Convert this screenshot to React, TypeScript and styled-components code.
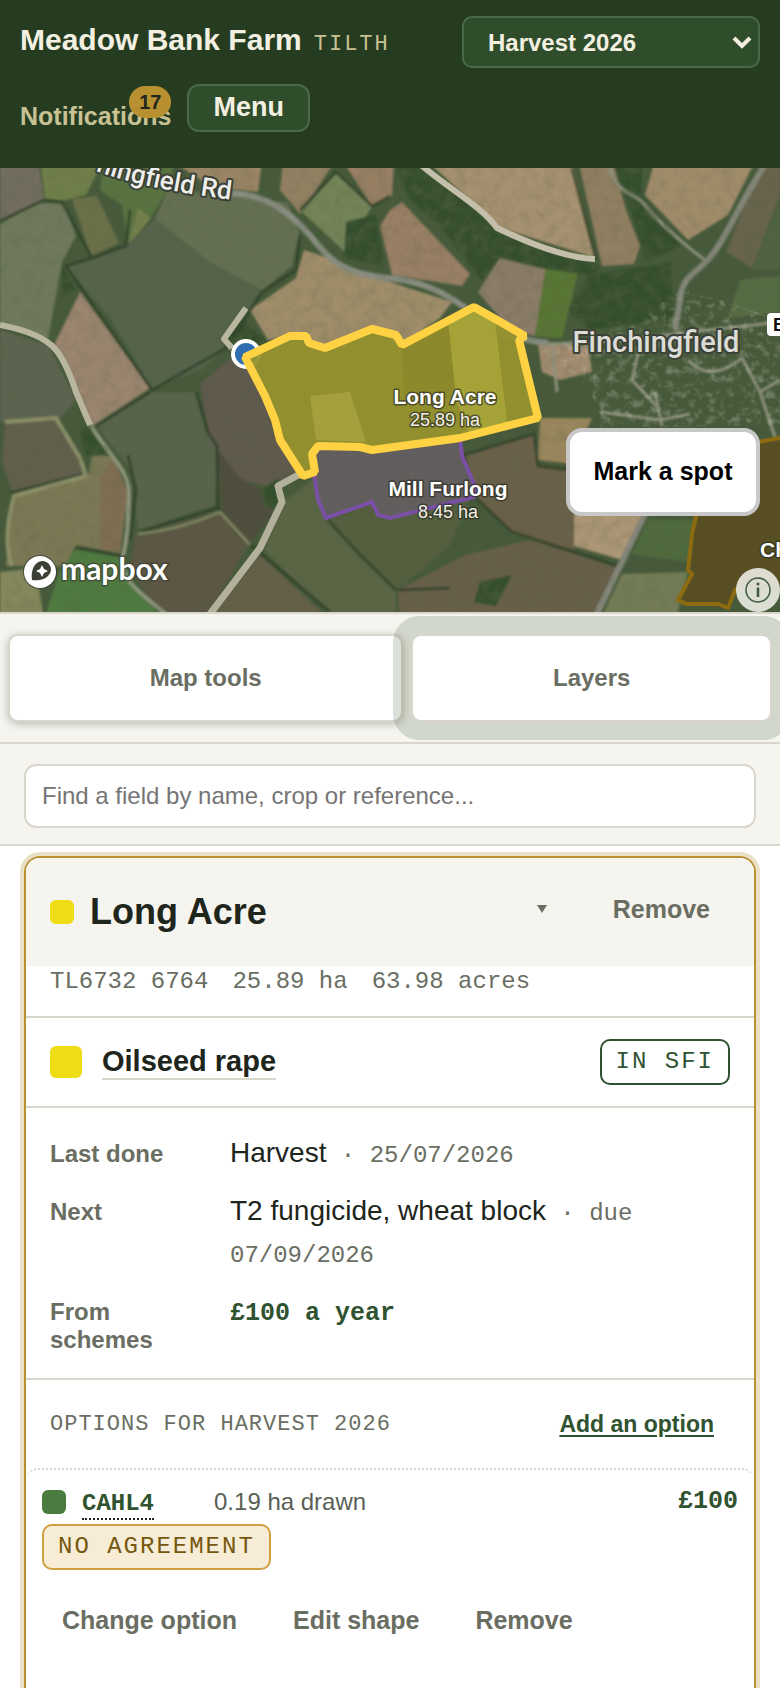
import React from "react";
import styled, { createGlobalStyle, css } from "styled-components";

const sans = `"Liberation Sans", Arial, sans-serif`;
const mono = `"Liberation Mono", "Courier New", monospace`;

const color = {
  forest: "#253c21",
  forestLight: "#2f4d2b",
  forestLine: "#49694a",
  cream: "#f3f0e2",
  sand: "#c8c193",
  gold: "#b8902f",
  paper: "#f5f4ef",
  line: "#d9d6cc",
  ink: "#20251c",
  muted: "#6a6e62",
  green: "#2f5230",
  rape: "#eedc14",
};

const GlobalStyle = createGlobalStyle`
  *, *::before, *::after { box-sizing: border-box; }
  html { background: #fff; scrollbar-width: none; }
  body { margin: 0; font-family: ${sans}; color: ${color.ink}; font-size: 24px; }
  button, input, select { font-family: inherit; }
  button { cursor: pointer; }
`;

const Page = styled.div`
  overflow: hidden;
  background: #fff;
`;

/* ---------- header ---------- */

const Header = styled.header`
  background: ${color.forest};
  padding: 16px 20px 36px;
  display: flex;
  flex-direction: column;
  gap: 16px;
`;

const HeaderRow = styled.div<{ $spread?: boolean }>`
  display: flex;
  align-items: center;
  gap: 16px;
  justify-content: ${(p) => (p.$spread ? "space-between" : "flex-start")};
`;

const Brand = styled.div`
  display: flex;
  align-items: baseline;
  gap: 12px;
  padding-bottom: 4px;
`;

const FarmName = styled.h1`
  margin: 0;
  font-size: 30px;
  line-height: 36px;
  font-weight: 700;
  color: ${color.cream};
`;

const Product = styled.span`
  font-family: ${mono};
  font-size: 22px;
  letter-spacing: 2px;
  color: ${color.sand};
`;

const SeasonBox = styled.div`
  position: relative;
  width: 298px;
`;

const SeasonSelect = styled.select`
  appearance: none;
  width: 100%;
  height: 52px;
  padding: 0 24px;
  border: 2px solid ${color.forestLine};
  border-radius: 10px;
  background: ${color.forestLight};
  color: ${color.cream};
  font-size: 24px;
  font-weight: 700;
`;

const SeasonArrow = styled.svg`
  position: absolute;
  right: 8px;
  top: 19px;
  pointer-events: none;
`;

const NotificationsLink = styled.a`
  position: relative;
  padding-top: 16px;
  font-size: 25px;
  line-height: 32px;
  font-weight: 700;
  color: ${color.sand};
  text-decoration: none;
`;

const Count = styled.span`
  position: absolute;
  right: 0;
  top: 2px;
  padding: 0 10px;
  border-radius: 16px;
  background: ${color.gold};
  color: ${color.ink};
  font-size: 20px;
  line-height: 32px;
`;

const MenuButton = styled.button`
  height: 48px;
  padding: 0 24px 2px;
  border: 2px solid ${color.forestLine};
  border-radius: 12px;
  background: ${color.forestLight};
  color: ${color.cream};
  font-size: 27px;
  font-weight: 700;
`;

/* ---------- map ---------- */

const MapArea = styled.section`
  position: relative;
  height: 444px;
  background: #566046;
`;

const MapCanvas = styled.svg`
  display: block;
  width: 100%;
  height: 100%;
  font-family: ${sans};
`;

const MarkButton = styled.button`
  position: absolute;
  right: 20px;
  bottom: 96px;
  width: 194px;
  height: 88px;
  padding: 0 0 2px;
  border: 4px solid #c9c8c9;
  border-radius: 16px;
  background: #fff;
  color: #000;
  font-size: 25px;
  font-weight: 700;
`;

const InfoButton = styled.button`
  position: absolute;
  right: 0;
  bottom: 0;
  width: 44px;
  height: 44px;
  padding: 0;
  border: 0;
  border-radius: 22px;
  background: rgba(240, 240, 232, 0.88);
  display: grid;
  place-items: center;
`;

/* ---------- tool bar and search ---------- */

const ToolBar = styled.div`
  display: flex;
  gap: 8px;
  padding: 20px 8px;
  border: solid ${color.line};
  border-width: 2px 0;
  background: ${color.paper};
`;

const ToolButton = styled.button<{ $ring?: boolean }>`
  flex: 1 1 auto;
  height: 88px;
  border: 2px solid ${color.line};
  border-radius: 10px;
  background: #fff;
  color: ${color.muted};
  font-size: 24px;
  font-weight: 700;
  ${(p) =>
    p.$ring
      ? css`
          position: relative;
          box-shadow: 0 0 0 18px rgba(57, 82, 38, 0.18);
        `
      : css`
          box-shadow: 0 2px 8px rgba(32, 37, 28, 0.28);
        `}
`;

const SearchBar = styled.div`
  padding: 20px 24px 16px;
  border-bottom: 2px solid ${color.line};
  background: ${color.paper};
`;

const SearchInput = styled.input`
  display: block;
  width: 100%;
  height: 64px;
  padding: 0 16px;
  border: 2px solid ${color.line};
  border-radius: 12px;
  background: #fff;
  font-size: 24px;
  &::placeholder {
    color: #757575;
    opacity: 1;
  }
`;

/* ---------- field card ---------- */

const Card = styled.article`
  margin: 10px 24px 0;
  border: 2px solid ${color.gold};
  border-bottom: 0;
  border-radius: 16px 16px 0 0;
  box-shadow: 0 0 0 4px #eae0c8;
`;

const CardHead = styled.header`
  display: flex;
  align-items: center;
  height: 108px;
  padding: 0 24px;
  gap: 16px;
  border-radius: 14px 14px 0 0;
  background: ${color.paper};
`;

const Swatch = styled.span<{ $size: number; $fill: string }>`
  flex: none;
  width: ${(p) => p.$size}px;
  height: ${(p) => p.$size}px;
  border-radius: 6px;
  background: ${(p) => p.$fill};
`;

const FieldName = styled.h2`
  flex: 1;
  margin: 0;
  font-size: 36px;
  line-height: 40px;
  font-weight: 700;
`;

const HeadActions = styled.div`
  display: flex;
  align-items: center;
  gap: 34px;
  padding-bottom: 6px;
`;

const FoldButton = styled.button`
  display: grid;
  place-items: center;
  padding: 12px;
  border: 0;
  background: none;
`;

const TextButton = styled.button`
  height: 48px;
  padding: 0 20px;
  border: 0;
  background: none;
  color: ${color.muted};
  font-size: 25px;
  font-weight: 700;
`;

const Measures = styled.div`
  display: flex;
  gap: 24px;
  padding: 0 24px 18px;
  border-bottom: 2px solid ${color.line};
  font-family: ${mono};
  font-size: 24px;
  line-height: 32px;
  color: ${color.muted};
`;

const CropRow = styled.div`
  display: flex;
  align-items: center;
  gap: 20px;
  height: 90px;
  padding: 0 24px;
  border-bottom: 2px solid ${color.line};
`;

const CropName = styled.a`
  margin-right: auto;
  border-bottom: 2px solid ${color.line};
  color: ${color.ink};
  font-size: 29px;
  line-height: 34px;
  font-weight: 700;
  text-decoration: none;
`;

const Tag = styled.span<{ $warn?: boolean }>`
  display: inline-block;
  padding: 0 14px;
  border: 2px solid ${(p) => (p.$warn ? "#d0a040" : color.green)};
  border-radius: 10px;
  background: ${(p) => (p.$warn ? "#f7ecd6" : "#fff")};
  color: ${(p) => (p.$warn ? "#76570f" : color.green)};
  font-family: ${mono};
  font-size: 24px;
  line-height: 42px;
  letter-spacing: 2px;
`;

const Facts = styled.dl`
  display: grid;
  grid-template-columns: 144px 1fr;
  column-gap: 36px;
  row-gap: 16px;
  align-items: baseline;
  margin: 0;
  padding: 24px;
  border-bottom: 2px solid ${color.line};
`;

const FactLabel = styled.dt`
  font-size: 24px;
  line-height: 28px;
  font-weight: 700;
  color: ${color.muted};
`;

const FactValue = styled.dd`
  margin: 0;
  font-size: 28px;
  line-height: 42px;
`;

const MonoText = styled.span<{ $strong?: boolean; $large?: boolean }>`
  font-family: ${mono};
  font-size: ${(p) => (p.$large ? 25 : 24)}px;
  line-height: 28px;
  font-weight: ${(p) => (p.$strong ? 700 : 400)};
  color: ${(p) => (p.$strong ? color.green : color.muted)};
`;

const OptionsHead = styled.div`
  display: flex;
  align-items: center;
  justify-content: space-between;
  height: 88px;
  padding: 0 40px 0 24px;
`;

const OptionsTitle = styled.h3`
  margin: 0;
  font-family: ${mono};
  font-size: 22px;
  font-weight: 400;
  letter-spacing: 1px;
  text-transform: uppercase;
  color: ${color.muted};
`;

const AddLink = styled.a`
  font-size: 23px;
  font-weight: 700;
  color: ${color.green};
  text-decoration: underline;
  text-decoration-thickness: 2px;
  text-underline-offset: 3px;
`;

const Option = styled.div`
  padding: 20px 16px 100px;
  border-top: 2px dotted ${color.line};
  border-radius: 12px 12px 0 0;
`;

const OptionLine = styled.div`
  display: flex;
  align-items: center;
  gap: 16px;
  height: 24px;
`;

const OptionCode = styled.a`
  margin-top: 6px;
  border-bottom: 2px dotted ${color.ink};
  font-family: ${mono};
  font-size: 24px;
  line-height: 28px;
  font-weight: 700;
  color: ${color.green};
  text-decoration: none;
`;

const OptionArea = styled.span`
  flex: 1;
  padding-left: 44px;
  font-size: 24px;
  line-height: 28px;
  color: #5b5f54;
`;

const OptionTags = styled.div`
  display: flex;
  margin-top: 10px;
`;

const OptionActions = styled.div`
  display: flex;
  gap: 16px;
  margin-top: 26px;
`;

/* ---------- aerial map drawing ---------- */

type Parcel = [points: string, fill: string];

const parcels: Parcel[] = [
  ["0,160 38,160 44,199 0,221", "#726d5d"],
  ["40,160 104,160 86,195 62,201 45,199", "#6f7f48"],
  ["0,224 38,203 64,204 76,236 62,262 48,340 0,323", "#70795d"],
  ["72,199 97,196 119,243 91,256", "#6c7049"],
  ["104,160 175,160 168,190 150,218 128,246 122,205 100,190", "#58733f"],
  ["128,246 138,208 151,218", "#77804d"],
  ["66,266 124,247 155,219 210,260 262,290 244,316 222,340 226,348 200,370 152,388 110,318", "#55634b"],
  ["155,219 168,190 235,195 288,203 299,232 292,266 262,290 210,262", "#657052"],
  ["80,292 150,388 92,426 78,394 54,345", "#9b856f"],
  ["0,330 48,345 76,400 60,418 0,422", "#5d6350"],
  ["170,160 262,160 258,192 210,186", "#9a8565"],
  ["283,160 336,160 300,214 280,190", "#938062"],
  ["336,172 372,206 345,252 302,212", "#738459"],
  ["342,160 394,160 392,196 372,206", "#987f64"],
  ["304,250 322,256 390,282 452,302 440,318 402,345 372,329 325,346 290,336 268,340 250,310 296,278", "#a08d6b"],
  ["390,210 402,202 470,274 462,286 392,275 380,226", "#997f65"],
  ["426,160 572,160 596,258 500,228", "#a6916f"],
  ["578,160 612,160 626,210 640,246 634,264 602,266", "#927f62"],
  ["655,160 756,160 728,215 688,240 645,195", "#a18c6a"],
  ["478,292 500,257 546,266 535,336 510,330", "#8a7c67"],
  ["546,266 578,272 562,338 535,336", "#587636"],
  ["762,160 780,160 780,196 752,268 726,252", "#68634e"],
  ["780,200 780,270 752,270", "#4f6442"],
  ["740,280 780,276 780,312 728,318", "#566c44"],
  ["5,422 55,417 85,465 82,475 12,492 2,460", "#625f4e"],
  ["12,497 88,476 92,456 112,456 128,492 120,553 76,545 65,566 6,566", "#7c7855"],
  ["100,480 112,456 128,492 120,553 100,548", "#806e53"],
  ["76,549 122,556 135,590 165,620 44,620 60,570", "#4f7a40"],
  ["0,572 36,568 44,620 0,620", "#85875b"],
  ["96,425 150,393 196,392 206,432 217,446 215,505 138,530 132,472", "#58634b"],
  ["200,384 240,350 258,385 278,440 300,470 268,486 240,480 210,440", "#605a4d"],
  ["218,450 240,478 262,490 274,512 248,545 222,512", "#4f4d3d"],
  ["135,535 218,512 248,545 205,620 165,620 130,570", "#5b5644"],
  ["260,555 330,620 208,620", "#655f4a"],
  ["286,500 314,478 328,520 396,590 396,620 335,620 264,550", "#5a6544"],
  ["328,520 372,504 382,520 400,516 470,498 450,545 398,590", "#555f41"],
  ["463,455 534,434 538,466 572,470 574,550 512,534 474,496", "#6a604a"],
  ["540,418 592,418 572,464 538,460", "#9a865c"],
  ["465,555 530,540 618,568 595,620 400,620 398,590", "#685e48"],
  ["574,512 644,512 622,560 574,546", "#ab9675"],
  ["648,520 695,520 692,562 632,554", "#4f6b3e"],
  ["622,574 688,572 676,620 600,620", "#737c57"],
  ["538,344 588,346 592,372 560,380 542,372", "#a18b70"],
];

const woods: string[] = [
  "392,160 420,160 500,234 600,266 596,276 540,268 500,258 482,282 440,225 410,200",
  "346,222 376,214 384,266 344,258",
  "240,318 266,340 244,348 226,340",
  "62,266 76,290 62,296",
  "80,430 90,424 110,452 86,456",
  "262,490 278,478 280,508 264,506",
  "480,582 512,575 496,606 474,602",
  "612,160 642,160 642,195 682,245 645,262 634,220",
  "590,275 670,262 674,318 590,330 568,310",
];

const hedges: string[] = [
  "M0,221 L44,200 L62,202 L92,258 L66,266 L152,390 L226,348 L262,292 L296,270 L300,236",
  "M92,258 L126,246 L130,210",
  "M93,428 L150,392",
  "M196,392 L208,432 L217,446 L218,508 L140,532",
  "M128,455 L136,490 L130,540",
  "M218,508 L240,536 L330,612",
  "M328,520 L360,555 L396,590",
  "M572,168 L596,260",
  "M464,455 L474,496 L512,532 L618,566",
  "M464,455 L534,434 L538,466 L570,470",
  "M10,493 L84,474",
  "M398,590 L450,588",
  "M76,548 L122,556",
  "M300,210 L336,172 L372,206 L390,196",
];

const lanes = [
  "M425,430 L430,420",
  "M525,340 L550,344 Q620,342 690,332 L780,322",
  "M608,160 C615,198 634,190 645,205 S690,250 708,262",
  "M552,344 L557,392",
  "M640,344 L632,380 L660,410",
  "M600,412 L660,420 L690,414",
  "M655,392 L662,426",
  "M688,360 Q710,384 742,358 L760,392 L780,380",
  "M760,392 L776,440",
];

const longAcre =
  "245,357 290,336 306,336 309,343 325,348 372,329 396,335 402,345 474,307 525,336 519,340 538,418 460,438 372,450 360,447 318,446 312,454 315,472 303,476 280,440 275,420 265,396";

function AerialMap() {
  return (
    <MapCanvas viewBox="0 168 780 444" preserveAspectRatio="xMidYMid slice" role="img" aria-label="Aerial map of the farm">
      <defs>
        <filter id="soft">
          <feGaussianBlur stdDeviation="1" />
        </filter>
        <filter id="grain" x="0" y="0" width="100%" height="100%">
          <feTurbulence type="fractalNoise" baseFrequency="0.09" numOctaves="4" seed="7" />
          <feColorMatrix values="0 0 0 0 0.08  0 0 0 0 0.12  0 0 0 0 0.05  1.6 0 0 0 -0.62" />
        </filter>
        <filter id="village" x="0" y="0" width="100%" height="100%">
          <feTurbulence type="fractalNoise" baseFrequency="0.12" numOctaves="3" seed="3" />
          <feColorMatrix values="0 0 0 0 0.68  0 0 0 0 0.66  0 0 0 0 0.56  0 2.4 0 0 -1.15" />
        </filter>
        <clipPath id="villageArea">
          <path d="M540,350 L640,320 L680,290 L720,300 L780,320 L780,425 L600,428 L590,385 Z" />
        </clipPath>
        <clipPath id="woodArea">
          {woods.map((w) => (
            <polygon key={w} points={w} />
          ))}
        </clipPath>
        <path id="roadName" d="M70,160 Q130,191 280,205" />
      </defs>

      <rect y="160" width="780" height="460" fill="#465a3b" />
      <g filter="url(#soft)">
        {parcels.map(([points, fill]) => (
          <polygon key={points} points={points} fill={fill} />
        ))}
        {woods.map((w) => (
          <polygon key={w} points={w} fill="#35502f" />
        ))}
        <g fill="none" stroke="#2e3f29" strokeWidth="3" opacity="0.8">
          {hedges.map((d) => (
            <path key={d} d={d} />
          ))}
        </g>
        <g fill="none" stroke="#8f927f" strokeWidth="3">
          {lanes.map((d) => (
            <path key={d} d={d} />
          ))}
        </g>
        <g fill="none" strokeLinejoin="round">
          <path d="M12,566 Q2,540 14,496 L86,476 L80,458 L56,418 L5,422" stroke="#8d9069" strokeWidth="4" />
          <path d="M138,534 Q180,530 220,512 L250,545" stroke="#7f8463" strokeWidth="3" />
          <path d="M232,193 C275,196 298,220 318,245 S358,275 395,279 S455,300 480,318 S520,340 548,343" stroke="#888d80" strokeWidth="6" />
          <path d="M768,160 C738,205 728,235 712,255 S682,275 680,300 L675,330" stroke="#858779" strokeWidth="6" />
          <path d="M646,512 L620,566 L594,620" stroke="#85877b" strokeWidth="6" />
          <path d="M90,424 C108,455 130,470 129,495 S128,535 123,556 S138,592 168,616" stroke="#8d957c" strokeWidth="4" />
        </g>
      </g>
      <rect y="160" width="780" height="460" filter="url(#grain)" opacity="0.25" />
      <g clipPath="url(#woodArea)">
        <rect y="160" width="780" height="460" filter="url(#grain)" opacity="0.7" />
      </g>
      <g clipPath="url(#villageArea)">
        <rect y="160" width="780" height="460" filter="url(#village)" opacity="0.35" />
      </g>

      <g fill="none" strokeLinejoin="round">
        <path d="M420,164 C450,190 480,205 497,228 Q560,258 595,259" stroke="#c4bfaa" strokeWidth="6" />
        <path d="M0,325 Q42,333 56,350 Q66,362 76,392 L90,425" stroke="#b9b69f" strokeWidth="6" />
        <path d="M246,308 L224,339 L232,348" stroke="#b9b79f" strokeWidth="6" />
        <path d="M300,474 L278,486 L282,502 L260,548 L210,614" stroke="#b3b19b" strokeWidth="7" />
      </g>

      <polygon
        points="314,474 318,500 326,518 372,502 381,518 394,517 470,499 475,490 462,456 460,436 372,450 318,446"
        fill="#6d5f6e"
        fillOpacity="0.7"
      />
      <path
        d="M314,474 L318,500 L326,518 L372,502 L378,515 L390,518 L474,497 L475,486 L462,456 L460,438"
        fill="none"
        stroke="#7a4fa6"
        strokeWidth="4"
      />
      <g>
        <polygon points="790,436 760,442 697,500 690,560 692,574 678,600 688,604 728,608 736,590 790,590" fill="#5e4b1c" fillOpacity="0.75" />
        <path d="M790,436 L758,442 M697,512 L692,534 L688,570 L692,574 L678,600 L686,604 L718,604 L728,608 L736,588" fill="none" stroke="#8d6b10" strokeWidth="4" />
      </g>

      <circle cx="246" cy="354" r="15" fill="#fff" />
      <circle cx="246" cy="354" r="11" fill="#2f6db0" />
      <polygon points={longAcre} fill="#96932e" fillOpacity="0.94" />
      <polygon points="448,322 474,309 495,321 508,428 470,436 456,400" fill="#a5a337" />
      <polygon points="310,396 350,392 366,442 316,440" fill="#a5a03e" />
      <polygon points="402,345 448,322 456,398 404,400" fill="#8b892b" />
      <polygon points={longAcre} fill="none" stroke="#ffd244" strokeWidth="8" strokeLinejoin="bevel" />

      <g fontFamily='Roboto, "Liberation Sans", sans-serif' fontWeight="500" fill="#dcdcd6" stroke="#3b4136" strokeWidth="4" paintOrder="stroke" strokeLinejoin="round">
        <text fontSize="26" fill="#eeeeea">
          <textPath href="#roadName" startOffset="28">
            hingfield Rd
          </textPath>
        </text>
        <text x="656" y="352" fontSize="29" textAnchor="middle">
          Finchingfield
        </text>
      </g>
      <rect x="767" y="313" width="40" height="23" rx="4" fill="#fff" />
      <text x="773" y="331" fontSize="18" fontWeight="700" fill="#111">
        B
      </text>

      <g fill="#fff" stroke="#2b2e22" strokeWidth="3" strokeOpacity="0.7" paintOrder="stroke" strokeLinejoin="round" textAnchor="middle">
        <text x="445" y="404" fontSize="21" fontWeight="700">
          Long Acre
        </text>
        <text x="445" y="426" fontSize="18" fill="#f1f0e4">
          25.89 ha
        </text>
        <text x="448" y="496" fontSize="21" fontWeight="700">
          Mill Furlong
        </text>
        <text x="448" y="518" fontSize="18" fill="#f1f0e4">
          8.45 ha
        </text>
        <text x="760" y="557" fontSize="21" fontWeight="700" textAnchor="start">
          Ch
        </text>
      </g>

      <g>
        <circle cx="40" cy="572" r="17" fill="#343a2c" fillOpacity="0.7" />
        <circle cx="40" cy="572" r="16" fill="#fff" />
        <path d="M32,580 C31,572 33,566 37,563 A8,8 0 1 1 48,576 C44,580 38,581 32,580 Z" fill="#3a4132" />
        <path d="M42,565 L44,569 L48,571 L44,573 L42,577 L40,573 L36,571 L40,569 Z" fill="#fff" />
        <text
          x="61"
          y="580"
          fontFamily='Lato, "Liberation Sans", sans-serif'
          fontSize="30"
          fontWeight="700"
          fill="#fff"
          stroke="#3c4232"
          strokeWidth="3"
          strokeOpacity="0.7"
          paintOrder="stroke"
        >
          mapbox
        </text>
      </g>
    </MapCanvas>
  );
}

/* ---------- page ---------- */

export default function App() {
  return (
    <Page>
      <GlobalStyle />
      <Header>
        <HeaderRow $spread>
          <Brand>
            <FarmName>Meadow Bank Farm</FarmName>
            <Product>TILTH</Product>
          </Brand>
          <SeasonBox>
            <SeasonSelect aria-label="Season" defaultValue="2026">
              <option value="2026">Harvest 2026</option>
            </SeasonSelect>
            <SeasonArrow width="20" height="15" viewBox="0 0 20 15" aria-hidden="true">
              <path d="M2 3 L10 11 L18 3" fill="none" stroke={color.cream} strokeWidth="4" />
            </SeasonArrow>
          </SeasonBox>
        </HeaderRow>
        <HeaderRow>
          <NotificationsLink href="#notifications">
            Notifications
            <Count>17</Count>
          </NotificationsLink>
          <MenuButton type="button">Menu</MenuButton>
        </HeaderRow>
      </Header>

      <main>
        <MapArea>
          <AerialMap />
          <MarkButton type="button">Mark a spot</MarkButton>
          <InfoButton type="button" aria-label="Map credits">
            <svg width="26" height="26" viewBox="0 0 26 26" aria-hidden="true">
              <circle cx="13" cy="13" r="12" fill="none" stroke="#3f5a3c" strokeWidth="1.5" />
              <circle cx="13" cy="7" r="1.5" fill="#3f5a3c" />
              <path d="M13 10.5 V20" fill="none" stroke="#3f5a3c" strokeWidth="2.5" />
            </svg>
          </InfoButton>
        </MapArea>

        <ToolBar>
          <ToolButton type="button">Map tools</ToolButton>
          <ToolButton type="button" $ring>
            Layers
          </ToolButton>
        </ToolBar>

        <SearchBar>
          <SearchInput type="search" aria-label="Find a field" placeholder="Find a field by name, crop or reference..." />
        </SearchBar>

        <Card>
          <CardHead>
            <Swatch $size={24} $fill={color.rape} />
            <FieldName>Long Acre</FieldName>
            <HeadActions>
              <FoldButton type="button" aria-label="Fold card">
                <svg width="10" height="8" viewBox="0 0 10 8" aria-hidden="true">
                  <path d="M0 0 H10 L5 8 Z" fill={color.muted} />
                </svg>
              </FoldButton>
              <TextButton type="button">Remove</TextButton>
            </HeadActions>
          </CardHead>
          <Measures>
            <span>TL6732 6764</span>
            <span>25.89 ha</span>
            <span>63.98 acres</span>
          </Measures>

          <CropRow>
            <Swatch $size={32} $fill={color.rape} />
            <CropName href="#crop">Oilseed rape</CropName>
            <Tag>IN SFI</Tag>
          </CropRow>

          <Facts>
            <FactLabel>Last done</FactLabel>
            <FactValue>
              Harvest<MonoText> · 25/07/2026</MonoText>
            </FactValue>
            <FactLabel>Next</FactLabel>
            <FactValue>
              T2 fungicide, wheat block<MonoText> · due 07/09/2026</MonoText>
            </FactValue>
            <FactLabel>From schemes</FactLabel>
            <FactValue>
              <MonoText $strong $large>
                £100 a year
              </MonoText>
            </FactValue>
          </Facts>

          <OptionsHead>
            <OptionsTitle>Options for harvest 2026</OptionsTitle>
            <AddLink href="#add-option">Add an option</AddLink>
          </OptionsHead>

          <Option>
            <OptionLine>
              <Swatch $size={24} $fill="#4a7c3f" />
              <OptionCode href="#cahl4">CAHL4</OptionCode>
              <OptionArea>0.19 ha drawn</OptionArea>
              <MonoText $strong $large>
                £100
              </MonoText>
            </OptionLine>
            <OptionTags>
              <Tag $warn>NO AGREEMENT</Tag>
            </OptionTags>
            <OptionActions>
              <TextButton type="button">Change option</TextButton>
              <TextButton type="button">Edit shape</TextButton>
              <TextButton type="button">Remove</TextButton>
            </OptionActions>
          </Option>
        </Card>
      </main>
    </Page>
  );
}
